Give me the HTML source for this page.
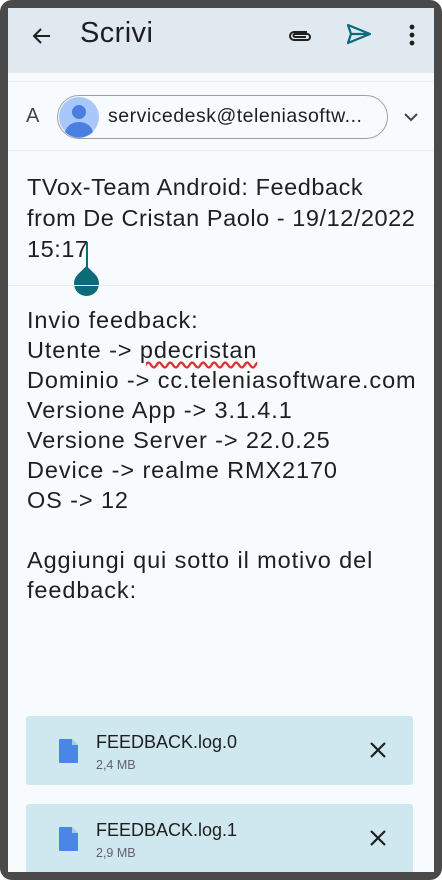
<!DOCTYPE html>
<html><head><meta charset="utf-8"><style>
*{margin:0;padding:0;box-sizing:border-box}
body{width:442px;height:880px;background:#fff;position:relative;overflow:hidden;font-family:"Liberation Sans",sans-serif;color:#1f1f1f}
.frame{position:absolute;left:0;top:0;width:442px;height:880px;background:#4a4a4a;border-radius:12px}
.screen{position:absolute;left:8px;top:8px;width:426px;height:864px;background:#f7fbfd;overflow:hidden}
.hdr{position:absolute;left:0;top:0;width:426px;height:65px;background:#e0e9ef}
.abs{position:absolute}
.sep{position:absolute;left:0;width:426px;height:1px;background:#e6ecef}
.t{position:absolute;left:19px;font-size:23.5px;letter-spacing:0.9px;line-height:30px;white-space:nowrap}
.card{position:absolute;left:18px;width:387px;height:69px;background:#cfe7ee;border-radius:3px}
</style></head><body>
<div class="frame"></div>
<div class="screen">
 <div class="hdr">
  <svg class="abs" style="left:22px;top:16px" width="24" height="24" viewBox="0 0 24 24"><path d="M20 12H5M11 5l-7 7 7 7" fill="none" stroke="#1f1f1f" stroke-width="2"/></svg>
  <div class="abs" style="left:72px;top:9px;font-size:29px;letter-spacing:0.4px;color:#1f1f1f">Scrivi</div>
  <svg class="abs" style="left:279px;top:16px" width="26" height="24" viewBox="0 0 26 24"><path d="M20 8H7a4 4 0 0 0 0 8h13a3 3 0 0 0 0-6H8a1.5 1.5 0 0 0 0 3h11" fill="none" stroke="#1f1f1f" stroke-width="2"/></svg>
  <svg class="abs" style="left:337px;top:14px" width="28" height="24" viewBox="0 0 28 24"><path d="M3 3l22 9-22 9 3-9zM6 12h18" fill="none" stroke="#0b6b7b" stroke-width="2.2" stroke-linejoin="round"/></svg>
  <svg class="abs" style="left:400px;top:16px" width="8" height="26" viewBox="0 0 8 26"><circle cx="4" cy="3" r="2.4" fill="#1f1f1f"/><circle cx="4" cy="11" r="2.4" fill="#1f1f1f"/><circle cx="4" cy="19" r="2.4" fill="#1f1f1f"/></svg>
 </div>
 <div class="sep" style="top:73px"></div>
 <div class="abs" style="left:18px;top:97px;font-size:20px;color:#444">A</div>
 <div class="abs" style="left:49px;top:87px;width:331px;height:44px;border:1px solid #9aa0a6;border-radius:22px"></div>
 <svg class="abs" style="left:50px;top:88px" width="42" height="42" viewBox="0 0 42 42"><circle cx="21" cy="21" r="20" fill="#a8c7fa"/><circle cx="21" cy="16" r="7" fill="#4a7fe0"/><path d="M7 36c2-7 8-10 14-10s12 3 14 10a20 20 0 0 1-28 0z" fill="#4a7fe0"/></svg>
 <div class="abs" style="left:100px;top:97px;font-size:19.5px;letter-spacing:0.5px;color:#1f1f1f">servicedesk@teleniasoftw...</div>
 <svg class="abs" style="left:394px;top:102px" width="18" height="14" viewBox="0 0 18 14"><path d="M3 4l6 6 6-6" fill="none" stroke="#444" stroke-width="2"/></svg>
 <div class="sep" style="top:142px"></div>
 <div class="t" style="top:164px;line-height:31px;letter-spacing:0.55px">TVox-Team Android: Feedback<br>from De Cristan Paolo - 19/12/2022<br>15:17</div>
 <div class="abs" style="left:78px;top:234px;width:2px;height:28px;background:#0b6b7b"></div>
 <div class="abs" style="left:66px;top:263px;width:25px;height:25px;background:#0b6b7b;border-radius:50% 0 50% 50%;transform:rotate(-45deg)"></div>
 <div class="sep" style="top:277px"></div>
 <div class="t" style="top:297px">Invio feedback:<br>Utente -&gt; <span style="text-decoration:underline wavy #d33;text-underline-offset:3px">pdecristan</span><br>Dominio -&gt; cc.teleniasoftware.com<br>Versione App -&gt; 3.1.4.1<br>Versione Server -&gt; 22.0.25<br>Device -&gt; realme RMX2170<br>OS -&gt; 12<br><br>Aggiungi qui sotto il motivo del<br>feedback:</div>
 <div class="card" style="top:708px">
  <svg class="abs" style="left:32px;top:22px" width="22" height="26" viewBox="0 0 22 26"><path d="M2 1h12l6 6v17a1 1 0 0 1-1 1H2a1 1 0 0 1-1-1V2a1 1 0 0 1 1-1z" fill="#4a86e8"/><path d="M14 1v6h6z" fill="#cfe7ee" opacity=".7"/></svg>
  <div class="abs" style="left:70px;top:16px;font-size:18px;color:#1f1f1f">FEEDBACK.log.0</div>
  <div class="abs" style="left:70px;top:42px;font-size:12.5px;color:#5f6368">2,4 MB</div>
  <svg class="abs" style="left:342px;top:24px" width="20" height="20" viewBox="0 0 20 20"><path d="M3 3l14 14M17 3L3 17" stroke="#1f1f1f" stroke-width="2.2"/></svg>
 </div>
 <div class="card" style="top:796px">
  <svg class="abs" style="left:32px;top:22px" width="22" height="26" viewBox="0 0 22 26"><path d="M2 1h12l6 6v17a1 1 0 0 1-1 1H2a1 1 0 0 1-1-1V2a1 1 0 0 1 1-1z" fill="#4a86e8"/><path d="M14 1v6h6z" fill="#cfe7ee" opacity=".7"/></svg>
  <div class="abs" style="left:70px;top:16px;font-size:18px;color:#1f1f1f">FEEDBACK.log.1</div>
  <div class="abs" style="left:70px;top:42px;font-size:12.5px;color:#5f6368">2,9 MB</div>
  <svg class="abs" style="left:342px;top:24px" width="20" height="20" viewBox="0 0 20 20"><path d="M3 3l14 14M17 3L3 17" stroke="#1f1f1f" stroke-width="2.2"/></svg>
 </div>
</div>
</body></html>
